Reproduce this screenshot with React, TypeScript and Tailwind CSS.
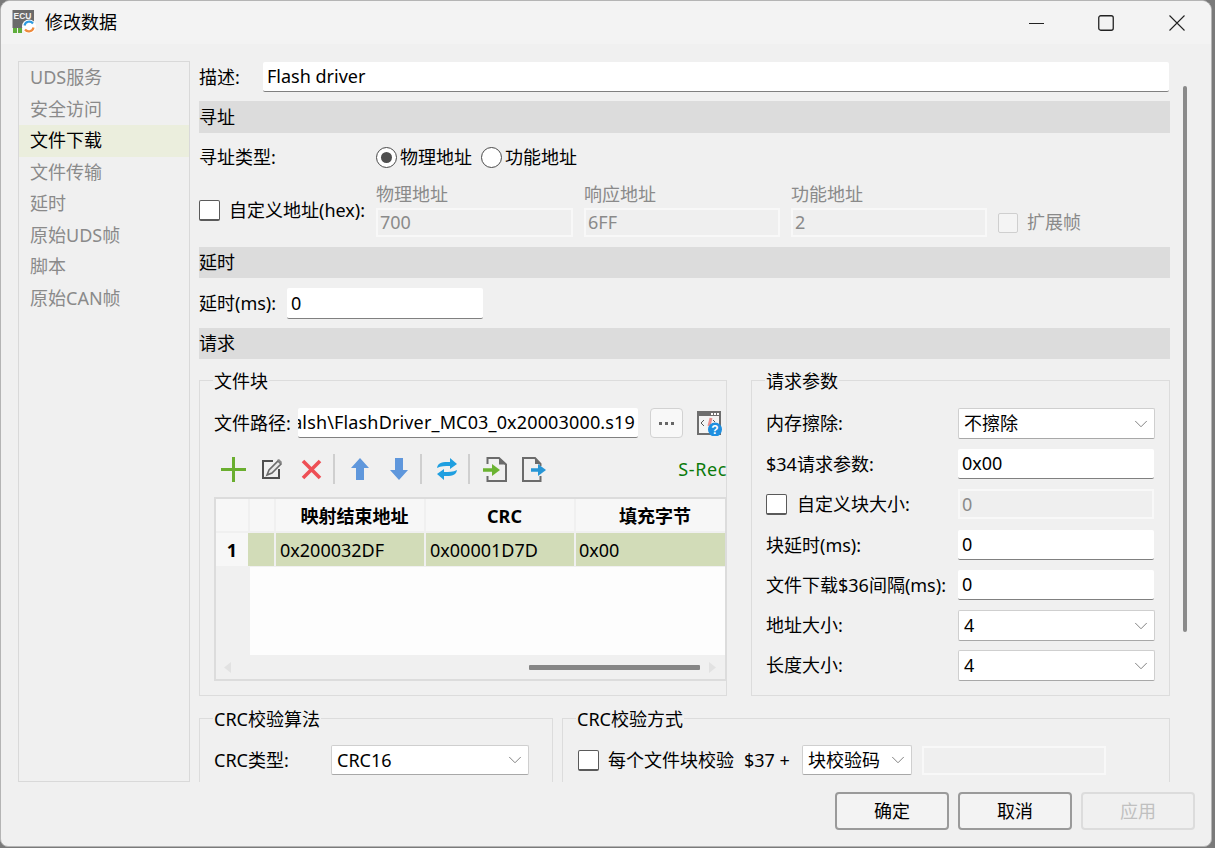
import { ReactNode } from "react";
import { ChevronDown } from "lucide-react";

const menu = ["UDS服务", "安全访问", "文件下载", "文件传输", "延时", "原始UDS帧", "脚本", "原始CAN帧"];

function AppIcon() {
  return (
    <svg width="24" height="24" viewBox="0 0 24 24">
      <rect x="0.5" y="0" width="21.500" height="18" fill="#6a6a6a" />
      <text x="1.500" y="8.500" fontSize="8.500" fontWeight="700" fill="#f2f2f2" fontFamily="Liberation Sans, sans-serif">ECU</text>
      <rect x="1" y="18" width="4" height="5" fill="#5fae3c" />
      <rect x="6" y="18" width="4" height="5" fill="#5fae3c" />
      <circle cx="17" cy="16.500" r="7" fill="#fff" />
      <path d="M12.500 15.500a4.800 4.800 0 0 1 8.500-2" fill="none" stroke="#2e9be0" strokeWidth="2.200" />
      <path d="M21.500 17.500a4.800 4.800 0 0 1-8.500 2" fill="none" stroke="#ee8a3c" strokeWidth="2.200" />
    </svg>
  );
}

function Header({ title, cls }: { title: string; cls: string }) {
  return <div className={`${cls} flex items-center bg-[#dcdcdc] w-[971px]`}>{title}</div>;
}

function Input({ value, cls }: { value: string; cls: string }) {
  return (
    <div className={`${cls} h-[30px] flex items-center bg-white border-b border-[#808080] rounded-[2px] pl-[4px] overflow-hidden whitespace-nowrap`}>
      {value}
    </div>
  );
}

function Disabled({ value, cls }: { value: string; cls: string }) {
  return (
    <div className={`${cls} flex items-center bg-[#efefef] border-2 border-[#f8f8f8] pl-[2px] text-[#8a8a8a]`}>
      {value}
    </div>
  );
}

function Combo({ value, cls }: { value: string; cls: string }) {
  return (
    <div className={`${cls} flex items-center justify-between bg-white border border-[#cfcfcf] border-b-[#a8a8a8] rounded-[2px] pl-[5px] pr-[2px]`}>
      <span>{value}</span>
      <ChevronDown className="w-[22px] h-[22px] text-[#777]" strokeWidth={1} />
    </div>
  );
}

function Check({ cls = "" }: { cls?: string }) {
  return <div className={`${cls} w-[21px] h-[21px] shrink-0 bg-white border border-[#5a5a5a] border-b-2 rounded-[2px]`} />;
}

function Radio({ on }: { on?: boolean }) {
  return (
    <div className="w-[21px] h-[21px] shrink-0 rounded-full bg-white border-[1.500px] border-[#4a4a4a] flex items-center justify-center">
      {on && <div className="w-[11px] h-[11px] rounded-full bg-[#4f4f4f]" />}
    </div>
  );
}

function Group({ title, cls, children }: { title: string; cls: string; children: ReactNode }) {
  return (
    <div className={`${cls} relative border border-[#dcdcdc] shrink-0`}>
      <div className="absolute -top-[13px] left-[13px] bg-[#f0f0f0] px-[1px] leading-[26px]">{title}</div>
      {children}
    </div>
  );
}

function ParamRow({ label, cls = "mt-[10px]", children }: { label: ReactNode; cls?: string; children: ReactNode }) {
  return (
    <div className={`${cls} flex items-center`}>
      <div className="w-[192px] whitespace-nowrap">{label}</div>
      {children}
    </div>
  );
}

function Sep({ cls }: { cls: string }) {
  return <div className={`${cls} w-[2px] h-[30px] bg-[#cfcfcf] shrink-0`} />;
}

function Toolbar() {
  return (
    <div className="mt-[16px] h-[30px] w-[513px] flex items-center">
      <svg className="ml-[7px]" width="25" height="25" viewBox="0 0 25 25">
        <path d="M12.500 0v25M0 12.500h25" stroke="#6aae2f" strokeWidth="3" />
      </svg>
      <svg className="ml-[15px]" width="22" height="22" viewBox="0 0 22 22" fill="none">
        <path d="M12 3H2v17h16v-9" stroke="#4f4f4f" strokeWidth="2" />
        <path d="M6 17l2-5 9-9 3 3-9 9z" fill="#e8e8e8" stroke="#6a6a6a" strokeWidth="1.600" />
        <path d="M16 2l2-1 3 3-1 2z" fill="#888" />
      </svg>
      <svg className="ml-[18px]" width="21" height="21" viewBox="0 0 21 21">
        <path d="M2 2l17 17M19 2L2 19" stroke="#ee4f55" strokeWidth="3.600" />
      </svg>
      <Sep cls="ml-[11px]" />
      <svg className="ml-[16px]" width="18" height="22" viewBox="0 0 18 22">
        <path d="M9 0l9 10h-5v12H5V10H0z" fill="#5f97dc" />
      </svg>
      <svg className="ml-[21px]" width="18" height="22" viewBox="0 0 18 22">
        <path d="M9 22L0 12h5V0h8v12h5z" fill="#5f97dc" />
      </svg>
      <Sep cls="ml-[12px]" />
      <svg className="ml-[14px]" width="22" height="24" viewBox="0 0 22 24" fill="none">
        <path d="M1 11C2 5 7 5 14 5V1l7 6-7 5V9C9 9 5 9 1 11z" fill="#1f9fe0" />
        <path d="M21 13c-1 6-6 6-13 6v4l-7-6 7-5v3c5 0 9 0 13-2z" fill="#1f9fe0" />
      </svg>
      <Sep cls="ml-[10px]" />
      <svg className="ml-[13px]" width="24" height="25" viewBox="0 0 24 25" fill="none">
        <path d="M4.500 7V1H16l7 6.500V24H4.500v-5" stroke="#6b6b6b" strokeWidth="2" />
        <path d="M16 1v6.500h7z" fill="#6b6b6b" />
        <path d="M0 13h10" stroke="#6ab331" strokeWidth="3.500" />
        <path d="M9 7l8 6-8 6z" fill="#6ab331" />
      </svg>
      <svg className="ml-[15px]" width="24" height="25" viewBox="0 0 24 25" fill="none">
        <path d="M18.500 9V7L13 1H1v23h17.500v-5" stroke="#6b6b6b" strokeWidth="2" />
        <path d="M13 1v6h5.500z" fill="#6b6b6b" />
        <path d="M9 13h8" stroke="#2796d6" strokeWidth="3.500" />
        <path d="M16 7l8 6-8 6z" fill="#2796d6" />
      </svg>
      <div className="ml-auto text-[#0b7a0b] tracking-[0.600px]">S-Rec</div>
    </div>
  );
}

function HelpIcon() {
  return (
    <svg className="ml-[14px] shrink-0" width="25" height="25" viewBox="0 0 25 25">
      <rect x="0" y="0" width="24" height="24" fill="#6e6e6e" />
      <rect x="2" y="5" width="20" height="17" fill="#f4f4f4" />
      <path d="M14 2h2v2h-2zM17 2h2v2h-2zM20 2h2v2h-2z" fill="#fff" />
      <path d="M7 9l-3 3 3 3" stroke="#555" fill="none" />
      <path d="M12 15l2-8" stroke="#e34a4a" strokeWidth="3" opacity="0.6" />
      <path d="M16 9l2 2" stroke="#555" fill="none" />
      <circle cx="18" cy="18.500" r="7" fill="#1f8fe0" />
      <text x="18" y="23" fontSize="12" fontWeight="700" fill="#fff" textAnchor="middle" fontFamily="Liberation Sans, sans-serif">?</text>
    </svg>
  );
}

function Table() {
  return (
    <div className="mt-[13px] h-[184px] w-[513px] border-2 border-[#dcdcdc] bg-[#f0f0f0] flex flex-col">
      <div className="grid grid-cols-[32px_24px_148px_148px_149px] gap-x-[2px] h-[32px] font-bold">
        <div className="bg-[#f7f7f7]" />
        <div className="bg-[#f7f7f7]" />
        <div className="bg-[#f7f7f7] flex items-center justify-center pl-[9px] pt-[2px]">映射结束地址</div>
        <div className="bg-[#f7f7f7] flex items-center justify-center pl-[9px] pt-[2px]">CRC</div>
        <div className="bg-[#f7f7f7] flex items-center justify-center pl-[9px] pt-[2px]">填充字节</div>
      </div>
      <div className="grid grid-cols-[32px_24px_148px_148px_149px] gap-x-[2px] mt-[2px] h-[33px]">
        <div className="bg-[#f7f7f7] flex items-center justify-center font-bold pt-[2px]">1</div>
        <div className="bg-[#d2dcb8] -ml-[2px]" />
        <div className="bg-[#d2dcb8] flex items-center pl-[4px] pt-[2px]">0x200032DF</div>
        <div className="bg-[#d2dcb8] flex items-center pl-[4px] pt-[2px]">0x00001D7D</div>
        <div className="bg-[#d2dcb8] flex items-center pl-[3px] pt-[2px]">0x00</div>
      </div>
      <div className="flex h-[88px] mt-[1px]">
        <div className="w-[34px]" />
        <div className="w-[475px] bg-[#fdfdfd]" />
      </div>
      <div className="flex items-center h-[24px] pl-[8px]">
        <svg width="7" height="11" viewBox="0 0 7 11"><path d="M7 0v11L0 5.500z" fill="#e2e2e2" /></svg>
        <div className="ml-[298px] w-[171px] h-[5px] bg-[#868686] rounded-[1px]" />
        <svg className="ml-[9px]" width="7" height="11" viewBox="0 0 7 11"><path d="M0 0v11l7-5.500z" fill="#e2e2e2" /></svg>
      </div>
    </div>
  );
}

export default function App() {
  return (
    <div className="w-[1215px] h-[848px] overflow-hidden bg-[#7a7a7a] text-black text-[18px] font-['Noto_Sans','Noto_Sans_CJK_SC',sans-serif]">
      <div className="w-[1212px] h-[847px] bg-[#f0f0f0] border border-[#b4b4b4] rounded-t-[10px] rounded-b-[8px] overflow-hidden flex flex-col">
        {/* title bar */}
        <div className="h-[43px] shrink-0 bg-[#f3f3f3] flex items-center">
          <div className="ml-[11px] -mt-[2px]"><AppIcon /></div>
          <div className="ml-[9px] -mt-[1px]">修改数据</div>
          <svg className="ml-auto" width="16" height="16" viewBox="0 0 16 16">
            <path d="M0 8.500h15" stroke="#222" strokeWidth="1" />
          </svg>
          <svg className="ml-[53px]" width="16" height="16" viewBox="0 0 16 16" fill="none">
            <rect x="0.750" y="0.750" width="14.500" height="14.500" rx="2" stroke="#222" strokeWidth="1.300" />
          </svg>
          <svg className="ml-[55px] mr-[26px]" width="16" height="16" viewBox="0 0 16 16">
            <path d="M0.500 0.500l15 15M15.500 0.500l-15 15" stroke="#222" strokeWidth="1.100" />
          </svg>
        </div>

        <div className="flex pt-[17px] h-[738px] shrink-0">
          {/* side menu */}
          <div className="ml-[17px] w-[172px] h-[721px] border border-[#d9d9d9] text-[#8a8a8a] shrink-0">
            {menu.map((m) => (
              <div key={m} className={`h-[31.500px] flex items-center pl-[11px] ${m === "文件下载" ? "bg-[#ebeedd] text-black" : ""}`}>
                {m}
              </div>
            ))}
          </div>

          {/* form */}
          <div className="ml-[9px] w-[971px] h-[721px] overflow-hidden flex flex-col shrink-0">
            <div className="mt-[1px] flex items-center">
              <div className="w-[64px]">描述:</div>
              <Input value="Flash driver" cls="w-[906px]" />
            </div>

            <Header title="寻址" cls="mt-[9px] h-[32px] shrink-0" />
            <div className="mt-[9px] h-[30px] flex items-center shrink-0">
              <div className="w-[177px]">寻址类型:</div>
              <Radio on />
              <span className="ml-[3px]">物理地址</span>
              <div className="ml-[9px]"><Radio /></div>
              <span className="ml-[3px]">功能地址</span>
            </div>

            <div className="mt-[12px] h-[53px] flex shrink-0">
              <div className="w-[177px] flex items-center">
                <Check />
                <span className="ml-[9px] whitespace-nowrap">自定义地址(hex):</span>
              </div>
              <div className="w-[197px] text-[#8a8a8a]">
                <div className="h-[24px] leading-[20px]">物理地址</div>
                <Disabled value="700" cls="h-[29px] w-[197px]" />
              </div>
              <div className="ml-[11px] w-[196px] text-[#8a8a8a]">
                <div className="h-[24px] leading-[20px]">响应地址</div>
                <Disabled value="6FF" cls="h-[29px] w-[196px]" />
              </div>
              <div className="ml-[11px] w-[196px] text-[#8a8a8a]">
                <div className="h-[24px] leading-[20px]">功能地址</div>
                <Disabled value="2" cls="h-[29px] w-[196px]" />
              </div>
              <div className="ml-[11px] flex items-center pt-[24px] text-[#8a8a8a]">
                <div className="w-[20px] h-[20px] bg-[#f4f4f4] border border-[#cfcfcf] rounded-[2px]" />
                <span className="ml-[9px]">扩展帧</span>
              </div>
            </div>

            <Header title="延时" cls="mt-[10px] h-[31px] shrink-0" />
            <div className="mt-[10px] flex items-center shrink-0">
              <div className="w-[88px] whitespace-nowrap">延时(ms):</div>
              <Input value="0" cls="w-[196px] !h-[31px]" />
            </div>
            <Header title="请求" cls="mt-[9px] h-[31px] shrink-0" />

            <div className="mt-[21px] flex gap-[24px] shrink-0">
              <Group title="文件块" cls="w-[528px] h-[316px] pl-[14px] pt-[27px]">
                <div className="flex items-center w-[513px]">
                  <div className="w-[84px] shrink-0">文件路径:</div>
                  <div className="w-[340px] h-[30px] shrink-0 bg-white border-b border-[#808080] rounded-[2px] flex items-center justify-end pr-[3px] overflow-hidden whitespace-nowrap">
                    <span className="shrink-0 tracking-[0.150px]">alsh\FlashDriver_MC03_0x20003000.s19</span>
                  </div>
                  <div className="ml-[12px] w-[33px] h-[30px] shrink-0 bg-[#f8f8f8] border border-[#d2d2d2] rounded-[4px] flex items-center justify-center gap-[3px]">
                    <i className="w-[3px] h-[3px] bg-[#666]" />
                    <i className="w-[3px] h-[3px] bg-[#666]" />
                    <i className="w-[3px] h-[3px] bg-[#666]" />
                  </div>
                  <HelpIcon />
                </div>
                <Toolbar />
                <Table />
              </Group>

              <Group title="请求参数" cls="w-[419px] h-[316px] px-[14px] pt-[27px]">
                <ParamRow label="内存擦除:" cls="">
                  <Combo value="不擦除" cls="w-[197px] h-[31px]" />
                </ParamRow>
                <ParamRow label="$34请求参数:">
                  <Input value="0x00" cls="w-[196px]" />
                </ParamRow>
                <ParamRow label={<span className="flex items-center"><Check /><span className="ml-[10px]">自定义块大小:</span></span>}>
                  <Disabled value="0" cls="w-[196px] h-[30px]" />
                </ParamRow>
                <ParamRow label="块延时(ms):" cls="mt-[11px]">
                  <Input value="0" cls="w-[196px]" />
                </ParamRow>
                <ParamRow label="文件下载$36间隔(ms):">
                  <Input value="0" cls="w-[196px]" />
                </ParamRow>
                <ParamRow label="地址大小:">
                  <Combo value="4" cls="w-[197px] h-[31px]" />
                </ParamRow>
                <ParamRow label="长度大小:" cls="mt-[9px]">
                  <Combo value="4" cls="w-[197px] h-[31px]" />
                </ParamRow>
              </Group>
            </div>

            <div className="mt-[22px] flex gap-[9px] shrink-0">
              <Group title="CRC校验算法" cls="w-[354px] h-[120px] px-[14px] pt-[26px]">
                <div className="flex items-center">
                  <div className="w-[117px]">CRC类型:</div>
                  <Combo value="CRC16" cls="w-[198px] h-[30px]" />
                </div>
              </Group>
              <Group title="CRC校验方式" cls="w-[608px] h-[120px] pl-[15px] pt-[26px]">
                <div className="flex items-center">
                  <Check />
                  <span className="ml-[9px] w-[136px] whitespace-nowrap">每个文件块校验</span>
                  <span className="w-[58px] whitespace-nowrap">$37 +</span>
                  <Combo value="块校验码" cls="w-[110px] h-[30px]" />
                  <Disabled value="" cls="ml-[10px] w-[184px] h-[29px]" />
                </div>
              </Group>
            </div>
          </div>

          {/* scroll bar */}
          <div className="ml-[13px] mt-[25px] w-[4px] h-[546px] bg-[#8a8a8a] rounded-full shrink-0" />
        </div>

        {/* dialog buttons */}
        <div className="flex justify-end gap-[9px] pr-[16px] pt-[10px]">
          <button className="w-[114px] h-[38px] bg-[#f3f3f3] border-2 border-[#9a9a9a] rounded-[4px]">确定</button>
          <button className="w-[114px] h-[38px] bg-[#f3f3f3] border-2 border-[#9a9a9a] rounded-[4px]">取消</button>
          <button className="w-[114px] h-[38px] bg-[#f0f0f0] border-2 border-[#dcdcdc] rounded-[4px] text-[#c0c0c0]">应用</button>
        </div>
      </div>
    </div>
  );
}
